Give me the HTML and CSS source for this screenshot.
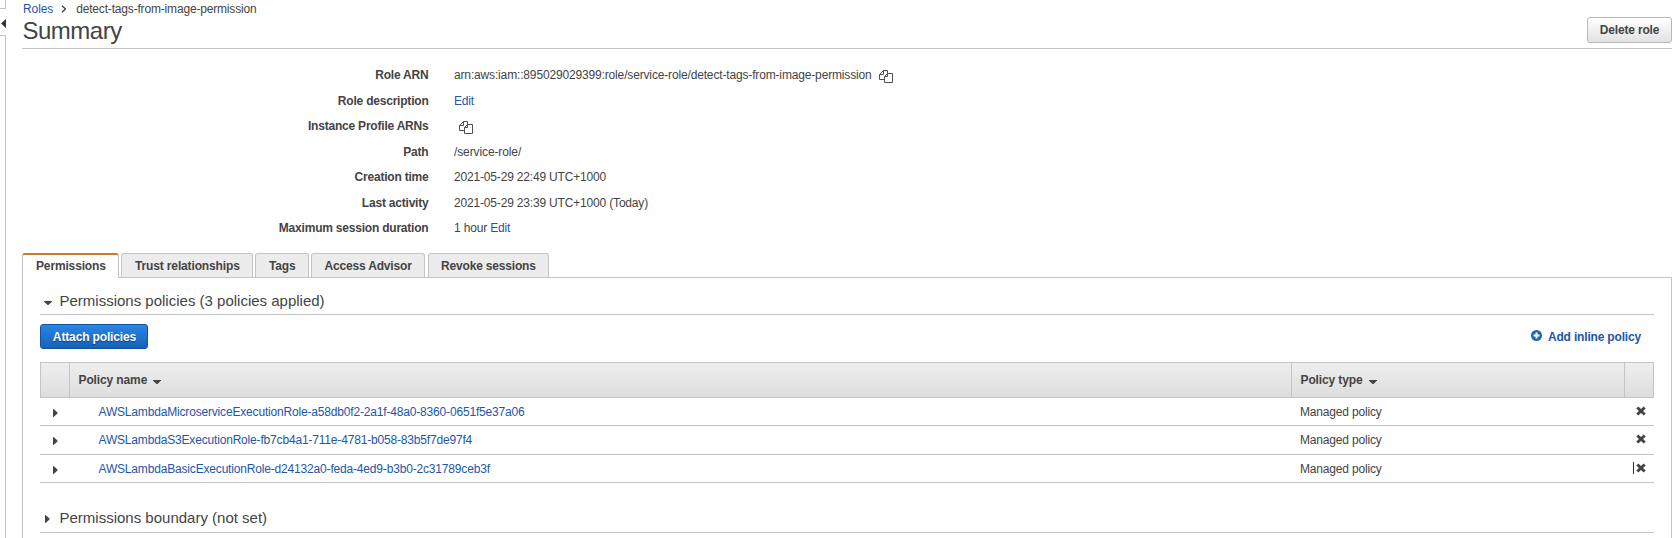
FILE: index.html
```html
<!DOCTYPE html>
<html lang="en">
<head>
<meta charset="utf-8">
<title>Role summary</title>
<link rel="stylesheet" href="styles.css">
</head>
<body>
<svg class="sprite" width="0" height="0">
  <symbol id="copy" viewBox="0 0 14 14">
    <path d="M8.500 3.500V.5H4.500L.5 4.500v5H5.500M4.500 .5V4.500H.5M8.500 3.500L5.500 6.500v6h8v-9zM8.500 3.500V6.500H5.500" fill="none" stroke="#505050"/>
  </symbol>
  <symbol id="down" viewBox="0 0 8 4"><path d="M0 0h8v.5L4.500 4h-1L0 .5z" fill="#444"/></symbol>
  <symbol id="right" viewBox="0 0 5 8"><path d="M0 0h.5l4 3.500v1l-4 3.500H0z" fill="#444"/></symbol>
  <symbol id="remove" viewBox="0 0 10 10"><path d="M1.300 1.500l7.400 7M8.700 1.500l-7.400 7" stroke="#444" stroke-width="3"/></symbol>
</svg>
<div class="page">
  <aside class="rail">
    <div class="rail-top"></div>
    <div class="rail-toggle"><svg width="5" height="9" viewBox="0 0 5 9"><path d="M5 0v9L0 4.500z" fill="#333"/></svg></div>
    <div class="rail-bottom"></div>
  </aside>
  <main class="content">
    <nav class="crumbs"><a class="t-roles">Roles</a><svg class="chev" width="6" height="8" viewBox="0 0 6 8"><path d="M1 .7L4.500 4 1 7.300" fill="none" stroke="#444" stroke-width="1.400"/></svg><span class="t-crumb">detect-tags-from-image-permission</span></nav>
    <header class="head"><h1>Summary</h1><button class="btn">Delete role</button></header>
    <dl class="details">
      <dt><span>Role ARN</span></dt><dd><span class="t-arn">arn:aws:iam::895029029399:role/service-role/detect-tags-from-image-permission</span><svg class="copy"><use href="#copy"/></svg></dd>
      <dt><span>Role description</span></dt><dd><a>Edit</a></dd>
      <dt><span>Instance Profile ARNs</span></dt><dd><svg class="copy lone"><use href="#copy"/></svg></dd>
      <dt><span>Path</span></dt><dd><span class="t-path">/service-role/</span></dd>
      <dt><span>Creation time</span></dt><dd><span>2021-05-29 22:49 UTC+1000</span></dd>
      <dt><span>Last activity</span></dt><dd><span>2021-05-29 23:39 UTC+1000 (Today)</span></dd>
      <dt><span>Maximum session duration</span></dt><dd><span>1 hour <a>Edit</a></span></dd>
    </dl>
    <div class="tabs">
      <div class="tab active"><span>Permissions</span></div>
      <div class="tab trust"><span>Trust relationships</span></div>
      <div class="tab tags"><span>Tags</span></div>
      <div class="tab advisor"><span>Access Advisor</span></div>
      <div class="tab revoke"><span>Revoke sessions</span></div>
    </div>
    <section class="panel">
      <h2><svg class="down"><use href="#down"/></svg><span>Permissions policies (3 policies applied)</span></h2>
      <div class="actions">
        <button class="btn primary">Attach policies</button>
        <a class="add"><svg width="11" height="11" viewBox="0 0 11 11"><circle cx="5.500" cy="5.500" r="5.500" fill="#1f65b0"/><path d="M5.500 2.500v6M2.500 5.500h6" stroke="#fff" stroke-width="2"/></svg><span>Add inline policy</span></a>
      </div>
      <div class="table">
        <div class="row thead"><div></div><div><span>Policy name</span><svg class="down"><use href="#down"/></svg></div><div><span>Policy type</span><svg class="down"><use href="#down"/></svg></div><div></div></div>
        <div class="row"><div><svg class="right"><use href="#right"/></svg></div><div><a>AWSLambdaMicroserviceExecutionRole-a58db0f2-2a1f-48a0-8360-0651f5e37a06</a></div><div><span>Managed policy</span></div><div><svg class="remove"><use href="#remove"/></svg></div></div>
        <div class="row tall"><div><svg class="right"><use href="#right"/></svg></div><div><a>AWSLambdaS3ExecutionRole-fb7cb4a1-711e-4781-b058-83b5f7de97f4</a></div><div><span>Managed policy</span></div><div><svg class="remove"><use href="#remove"/></svg></div></div>
        <div class="row"><div><svg class="right"><use href="#right"/></svg></div><div><a>AWSLambdaBasicExecutionRole-d24132a0-feda-4ed9-b3b0-2c31789ceb3f</a></div><div><span>Managed policy</span></div><div><i class="caret"></i><svg class="remove"><use href="#remove"/></svg></div></div>
      </div>
      <h2 class="boundary"><svg class="right"><use href="#right"/></svg><span>Permissions boundary (not set)</span></h2>
    </section>
  </main>
</div>
</body>
</html>
```
FILE: styles.css
```css
* { box-sizing: border-box; }
body { margin: 0; background: #fff; color: #444; font: 12px/16px "Liberation Sans", Arial, sans-serif; letter-spacing: -.175px; overflow: hidden; }
.sprite { display: block; height: 0; }
svg { flex: none; display: block; }
span, a, h1 { white-space: nowrap; }
a { color: #1e56a8; }
.page { display: flex; height: 538px; }
.rail { width: 22px; flex: none; display: flex; flex-direction: column; }
.rail-top { width: 6px; height: 9px; border: solid #c4c4c4; border-width: 0 1px 1px 0; }
.rail-toggle { height: 26px; padding: 10px 0 0 1px; }
.rail-bottom { width: 6px; flex: 1; border: solid #c4c4c4; border-width: 1px 1px 0 0; }
.content { width: 1650px; display: flex; flex-direction: column; }
.crumbs { height: 17px; display: flex; align-items: center; padding-left: 1px; }
.t-roles { letter-spacing: -.1px; }
.chev { margin: 0 9px 0 8px; }
.head { height: 32px; display: flex; justify-content: space-between; border-bottom: 1px solid #c4c4c4; padding-left: .5px; }
h1 { margin: 0; font-size: 24px; line-height: 28px; font-weight: 400; letter-spacing: -.5px; }
.btn { font: bold 12px/16px "Liberation Sans", Arial, sans-serif; letter-spacing: -.175px; color: #444; width: 85px; height: 26px; padding: 0; border: 1px solid #b8b8b8; border-radius: 3px; background: linear-gradient(#fff, #e2e2e2); white-space: nowrap; }
.details { margin: 0; padding-top: 13.200px; height: 204px; display: grid; grid-template-columns: 406.500px 1fr; grid-auto-rows: 25.470px; column-gap: 25.500px; align-content: start; }
dt, dd { margin: 0; display: flex; align-items: center; height: 26px; }
dt { justify-content: flex-end; font-weight: 700; letter-spacing: -.21px; }
.t-arn { letter-spacing: -.155px; }
.t-path { letter-spacing: -.11px; }
.copy { width: 14px; height: 14px; margin: 3px 0 0 7px; }
.copy.lone { margin-left: 4.500px; }
.tabs { display: flex; height: 24px; gap: 3px; }
.tab { height: 24px; border: 1px solid #c4c4c4; border-bottom: 0; border-radius: 3px 3px 0 0; background: #ececec; font-weight: 700; padding: 4px 0 0 13px; }
.active { width: 97px; height: 25px; margin-right: -1px; background: #fff; border-top: 2px solid #cc7a29; padding-top: 3px; position: relative; letter-spacing: -.15px; }
.trust { width: 132px; letter-spacing: -.14px; }
.tags { width: 54px; margin-left: -1px; }
.advisor { width: 114px; margin-left: -1px; padding-left: 12.500px; }
.revoke { width: 121px; padding-left: 12px; }
.panel { flex: 1; border: 1px solid #c4c4c4; border-bottom: 0; padding: 0 17px; }
h2 { margin: 0; height: 37px; padding: 10px 0 0 4px; display: flex; align-items: center; font-size: 15px; font-weight: 400; line-height: 20px; letter-spacing: 0; border-bottom: 1px solid #c4c4c4; }
.down { width: 8px; height: 4px; margin-top: 2px; }
.right { width: 5px; height: 8px; }
h2 .down { margin: 4px 8px 0 0; }
h2 .down + span { margin-left: -.5px; }
.actions { height: 47px; display: flex; justify-content: space-between; padding: 9px 13px 0 0; }
.btn.primary { width: 108px; height: 25px; letter-spacing: -.14px; padding-left: 1px; color: #fff; border-color: #14529c; background: linear-gradient(#2686e6, #1762b8); text-shadow: 0 1px 1px #0b3e7c; }
.add { display: flex; gap: 6px; height: 25px; align-items: center; font-weight: 700; }
.add svg { margin-top: -2px; }
.row { height: 28px; display: grid; grid-template-columns: 29px 1222px 333px 30px; border-bottom: 1px solid #c4c4c4; }
.row.tall { height: 29px; }
.row > div { display: flex; align-items: center; }
.row > div:nth-child(1) { padding: 2px 0 0 13px; }
.row > div:nth-child(2) { padding-left: 29.500px; }
.row > div:nth-child(3) { padding-left: 9px; }
.row > div:nth-child(4) { padding: 0 0 2px 11.500px; }
.row.thead { height: 36px; border: 1px solid #c4c4c4; background: linear-gradient(#eee, #ddd); font-weight: 700; letter-spacing: -.12px; grid-template-columns: 28px 1222px 333px 29px; }
.thead > div + div { border-left: 1px solid #c4c4c4; }
.row.thead > div:nth-child(2), .row.thead > div:nth-child(3) { padding-left: 8.500px; }
.thead .down { margin-left: 6px; margin-top: 4px; }
.remove { width: 10px; height: 10px; }
.caret { width: 1px; height: 12px; background: #333; margin: 0 2px 0 -3px; }
h2.boundary { height: 50px; padding-top: 21px; }
.boundary .right { margin: 2px 9.500px 0 1px; }
```
